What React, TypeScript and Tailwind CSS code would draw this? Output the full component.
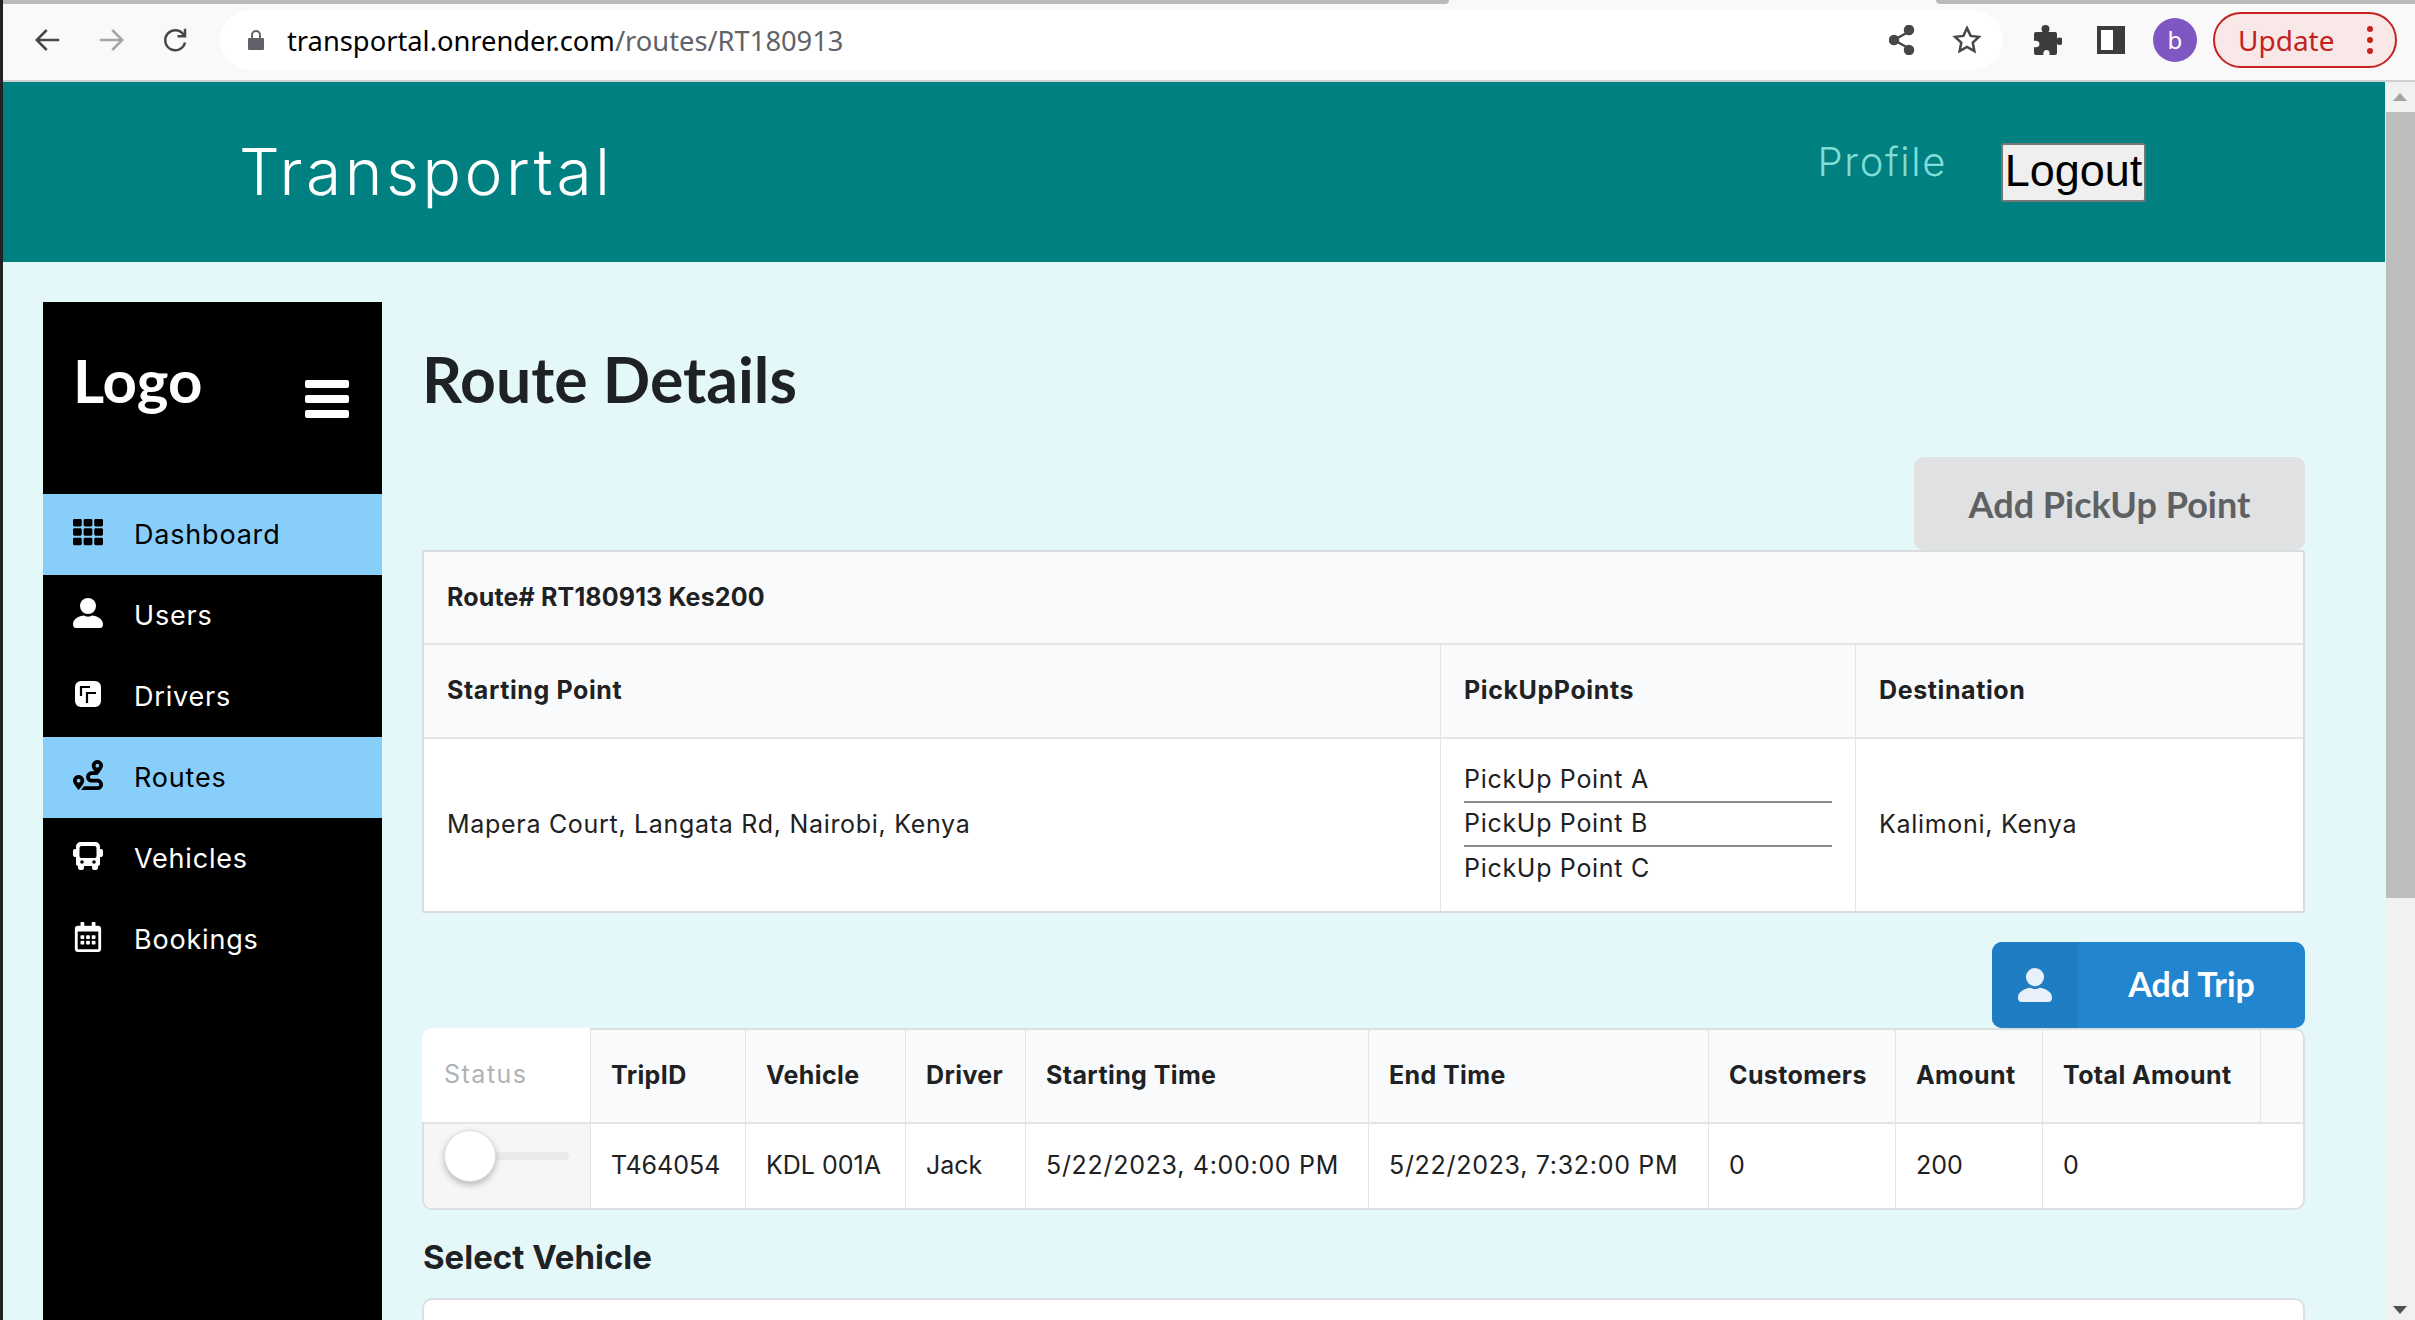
import { FaTh, FaRoute, FaRegCalendarAlt } from "react-icons/fa";

function UserIcon({ size = 30 }: { size?: number }) {
  return (
    <svg width={size} height={size} viewBox="0 0 30 30" fill="currentColor">
      <circle cx="15" cy="8" r="8" />
      <path d="M0 26c0-5 6-8 11-8.500 2 1.500 6 1.500 8 0 5 .5 11 3.500 11 8.500 0 2.500-1 4-3 4H3c-2 0-3-1.500-3-4z" />
    </svg>
  );
}

function DriverIcon() {
  return (
    <svg width="26" height="26" viewBox="0 0 26 26">
      <rect width="26" height="26" rx="6" fill="currentColor" />
      <path d="M6 15V6h9M12 22V12h9" fill="none" stroke="#000" strokeWidth="2.200" />
    </svg>
  );
}

function BusIcon() {
  return (
    <svg width="30" height="30" viewBox="0 0 30 30">
      <path
        fill="currentColor"
        d="M8 1h14c3 0 5 2 5 5v2h1a2 2 0 0 1 2 2v4a2 2 0 0 1-2 2h-1v7c0 1-1 2-2 2v2a2 2 0 0 1-2 2h-2a2 2 0 0 1-2-2v-2h-8v2a2 2 0 0 1-2 2H7a2 2 0 0 1-2-2v-2c-1 0-2-1-2-2v-7H2a2 2 0 0 1-2-2v-4a2 2 0 0 1 2-2h1V6c0-3 2-5 5-5z"
      />
      <rect x="6.500" y="5" width="17" height="12" rx="2" fill="#000" />
      <circle cx="9" cy="21" r="1.800" fill="#000" />
      <circle cx="21" cy="21" r="1.800" fill="#000" />
    </svg>
  );
}

function PuzzleIcon() {
  return (
    <svg width="29" height="30" viewBox="0 0 29 30" fill="#3c3c3c">
      <path d="M3 7h6.500c-.5-1-1-1.800-1-3a4 4 0 0 1 8 0c0 1.200-.5 2-1 3H22a2 2 0 0 1 2 2v4.500c1-.5 1.500-1 2.500-1a3.500 3.500 0 0 1 0 7.500c-1 0-1.500-.5-2.500-1V28a2 2 0 0 1-2 2h-5.500c.5-4-1-5-3-5s-3.500 1-3 5H3a2 2 0 0 1-2-2v-6c3 1 5.500-.5 5.500-3S4 15 1 16V9a2 2 0 0 1 2-2z" />
    </svg>
  );
}

const menu = [
  { label: "Dashboard", icon: <FaTh size={30} />, active: true },
  { label: "Users", icon: <UserIcon /> },
  { label: "Drivers", icon: <div className="pl-[2px]"><DriverIcon /></div> },
  { label: "Routes", icon: <FaRoute size={30} />, active: true },
  { label: "Vehicles", icon: <BusIcon /> },
  { label: "Bookings", icon: <FaRegCalendarAlt size={30} /> },
];

function BrowserBar() {
  return (
    <div className="h-[82px] shrink-0 bg-[#f9f9f9] border-b-2 border-[#cfcfcf] relative flex items-center">
      <div className="absolute top-0 left-0 w-[1446px] h-[4px] bg-[#b9b9b9] rounded-br-[4px]" />
      <div className="absolute top-0 right-0 w-[479px] h-[4px] bg-[#b9b9b9] rounded-bl-[4px]" />
      <div className="flex items-center w-[217px] pl-[30px] gap-[33px] text-[#45474a]">
        <svg width="30" height="30" viewBox="0 0 24 24" fill="none" stroke="currentColor" strokeWidth="2">
          <path d="M21 12H4M11 4l-8 8 8 8" />
        </svg>
        <svg width="30" height="30" viewBox="0 0 24 24" fill="none" stroke="#a5a6a8" strokeWidth="2">
          <path d="M3 12h17M13 4l8 8-8 8" />
        </svg>
        <svg className="ml-[1px]" width="30" height="30" viewBox="0 0 24 24" fill="none" stroke="currentColor" strokeWidth="2">
          <path d="M19 8a8 8 0 1 0 1 6" />
          <path d="M20 3v6h-6" />
        </svg>
      </div>
      <div className="w-[1783px] h-[60px] bg-white rounded-full flex items-center pl-[27px] pr-[21px]">
        <svg width="18" height="22" viewBox="0 0 18 22" fill="#5f6368">
          <path d="M2 9h14a1 1 0 0 1 1 1v10a1 1 0 0 1-1 1H2a1 1 0 0 1-1-1V10a1 1 0 0 1 1-1z" />
          <path d="M5 9V6a4 4 0 0 1 8 0v3" fill="none" stroke="#5f6368" strokeWidth="2" />
        </svg>
        <div className="ml-[22px] mt-[1px] text-[27.300px] font-['Noto_Sans',sans-serif] text-black leading-none">
          transportal.onrender.com<span className="text-[#5f6368]">/routes/RT180913</span>
        </div>
        <div className="ml-auto flex items-center gap-[37px] text-[#45474a]">
          <svg width="26" height="30" viewBox="0 0 26 30" fill="none" stroke="currentColor" strokeWidth="2.500">
            <path d="M21 6L5 15l16 9" />
            <circle cx="20" cy="5" r="4" fill="currentColor" />
            <circle cx="5" cy="15" r="4" fill="currentColor" />
            <circle cx="20" cy="25" r="4" fill="currentColor" />
          </svg>
          <svg width="30" height="30" viewBox="0 0 24 24" fill="none" stroke="currentColor" strokeWidth="2">
            <path d="M12 2.500l2.900 6.200 6.600.8-4.900 4.600 1.300 6.700L12 17.500l-5.900 3.300 1.300-6.700L2.500 9.500l6.600-.8z" />
          </svg>
        </div>
      </div>
      <div className="ml-[30px]">
        <PuzzleIcon />
      </div>
      <div className="ml-[35px] w-[28px] h-[28px] bg-white border-[4px] border-[#3c3c3c] border-r-[12px]" />
      <div className="ml-[28px] w-[44px] h-[44px] rounded-full bg-[#7e57c2] text-white text-[24px] flex items-center justify-center font-['Noto_Sans',sans-serif]">
        b
      </div>
      <div className="ml-[16px] w-[184px] h-[56px] rounded-full border-2 border-[#c5221f] bg-[#f9e8e8] flex items-center pl-[23px] text-[#c5221f] text-[28px] font-['Noto_Sans',sans-serif]">
        Update
        <div className="ml-[32px] flex flex-col gap-[5px]">
          <span className="w-[6px] h-[6px] rounded-full bg-[#c5221f]" />
          <span className="w-[6px] h-[6px] rounded-full bg-[#c5221f]" />
          <span className="w-[6px] h-[6px] rounded-full bg-[#c5221f]" />
        </div>
      </div>
    </div>
  );
}

function Sidebar() {
  return (
    <aside className="w-[339px] shrink-0 bg-black text-white mt-[40px] ml-[40px]">
      <div className="h-[192px] flex items-start justify-between pl-[30px] pr-[33px]">
        <div className="mt-[42px] text-[60px] font-bold leading-[72px] font-['Lato',sans-serif]">Logo</div>
        <div className="mt-[78px] w-[44px] flex flex-col gap-[7px]">
          <span className="h-[8px] rounded-[2px] bg-white" />
          <span className="h-[8px] rounded-[2px] bg-white" />
          <span className="h-[8px] rounded-[2px] bg-white" />
        </div>
      </div>
      {menu.map((m) => (
        <div
          key={m.label}
          className={`h-[81px] flex items-center pl-[30px] ${m.active ? "bg-[#87cefa] text-black" : ""}`}
        >
          <div className="w-[61px] -mt-[6px]">{m.icon}</div>
          <div className="mt-[2px] text-[27px] tracking-[0.8px] font-['Inter',sans-serif]">{m.label}</div>
        </div>
      ))}
    </aside>
  );
}

const th = "px-[23px] flex items-center font-bold tracking-[0.6px] text-[#202122] bg-[#f9fafb] border-r border-[#e3e4e5] last:border-r-0";
const td = "flex items-center tracking-[0.7px] text-[#202122] border-r border-[#e3e4e5] last:border-r-0";

function RouteTable() {
  return (
    <div className="border-2 border-[#d8dcdc] bg-white text-[25px] font-['Inter',sans-serif] rounded-[2px]">
      <div className="h-[93px] px-[23px] flex items-center font-bold tracking-[0.15px] text-[#202122] bg-[#f9fafb] border-b-2 border-[#e3e4e5]">
        Route# RT180913 Kes200
      </div>
      <div className="h-[94px] grid grid-cols-[1017px_415px_1fr] border-b-2 border-[#e3e4e5]">
        <div className={th}>Starting Point</div>
        <div className={th}>PickUpPoints</div>
        <div className={th}>Destination</div>
      </div>
      <div className="h-[172px] grid grid-cols-[1017px_415px_1fr]">
        <div className={`${td} px-[23px]`}>Mapera Court, Langata Rd, Nairobi, Kenya</div>
        <div className={`${td} px-[23px]`}>
          <div className="w-full">
            <div className="h-[44px] flex items-center border-b-2 border-[#8d8d8d]">PickUp Point A</div>
            <div className="h-[44px] flex items-center border-b-2 border-[#8d8d8d]">PickUp Point B</div>
            <div className="h-[44px] flex items-center">PickUp Point C</div>
          </div>
        </div>
        <div className={`${td} px-[23px]`}>Kalimoni, Kenya</div>
      </div>
    </div>
  );
}

const tripCols = "grid grid-cols-[167px_155px_160px_120px_343px_340px_187px_147px_218px_1fr]";

function TripTable() {
  const heads = ["TripID", "Vehicle", "Driver", "Starting Time", "End Time", "Customers", "Amount", "Total Amount", ""];
  const cells = ["T464054", "KDL 001A", "Jack", "5/22/2023, 4:00:00 PM", "5/22/2023, 7:32:00 PM", "0", "200", "0"];
  return (
    <div className="border-2 border-[#dcdfdf] rounded-[10px] bg-white text-[25px] font-['Inter',sans-serif] h-[182px]">
      <div className={`${tripCols} h-[94px] border-b-2 border-[#e3e4e5]`}>
        <div className="bg-white rounded-tl-[10px] -mt-[2px] -ml-[2px] px-[22px] flex items-center tracking-[1.5px] text-[#b0b2b3] border-r border-[#e3e4e5]">
          Status
        </div>
        {heads.map((h, i) => (
          <div key={i} className={`${th} !px-[20px] !tracking-[0.4px] ${i === heads.length - 1 ? "rounded-tr-[10px]" : ""}`}>
            {h}
          </div>
        ))}
      </div>
      <div className={`${tripCols} h-[84px]`}>
        <div className="bg-[#f6f6f6] rounded-bl-[10px] border-r border-[#e3e4e5] relative">
          <div className="absolute left-[50px] top-[28px] w-[95px] h-[8px] rounded-[4px] bg-[#e9e9e9]" />
          <div className="absolute left-[20px] top-[6px] w-[52px] h-[52px] rounded-full bg-white border border-[#dcdcdc] shadow-[0_3px_6px_rgba(0,0,0,0.25)]" />
        </div>
        {cells.map((c, i) => (
          <div key={i} className={`${td} px-[20px] ${c.includes("/") ? "" : "!tracking-[0px]"}`}>
            {c}
          </div>
        ))}
      </div>
    </div>
  );
}

export default function App() {
  return (
    <div className="w-[2415px] h-[1320px] overflow-hidden flex flex-col border-l-[3px] border-[#222] bg-[#e5f8f9]">
      <BrowserBar />
      <div className="flex-1 flex min-h-0">
        <div className="flex-1 flex flex-col min-w-0">
          <header className="h-[180px] shrink-0 bg-[#008080] flex items-center">
            <div className="ml-[236px] text-[64px] font-light tracking-[3.500px] text-white font-['Inter',sans-serif]">
              Transportal
            </div>
            <div className="ml-auto mr-[54px] -mt-[20px] text-[40px] font-light tracking-[1.600px] text-[#7fdcd6] font-['Inter',sans-serif]">
              Profile
            </div>
            <button className="mr-[239px] w-[145px] h-[59px] pb-[3px] bg-[#efefef] border-2 border-[#767676] rounded-[3px] text-[45px] leading-none text-black font-['Liberation_Sans',sans-serif]">
              Logout
            </button>
          </header>
          <div className="flex-1 flex min-h-0">
            <Sidebar />
            <main className="flex-1 min-w-0 pl-[40px] pr-[80px]">
              <div className="h-[195px] pt-[81px]">
                <h1 className="text-[62.500px] leading-[72px] font-bold text-[#1f2224] font-['Lato',sans-serif]">Route Details</h1>
              </div>
              <div className="flex justify-end">
                <div className="w-[391px] h-[93px] rounded-[10px] bg-[#e0e1e2] text-[#5f6061] text-[36px] font-bold flex items-center justify-center font-['Lato',sans-serif]">
                  Add PickUp Point
                </div>
              </div>
              <RouteTable />
              <div className="flex justify-end mt-[29px]">
                <div className="w-[313px] h-[86px] rounded-[10px] bg-[#2185d0] text-white text-[34px] font-bold flex overflow-hidden font-['Lato',sans-serif]">
                  <div className="w-[86px] bg-[#1f7dc4] flex items-center justify-center text-[#e8f1f9]">
                    <UserIcon size={34} />
                  </div>
                  <div className="flex-1 flex items-center justify-center pb-[4px]">Add Trip</div>
                </div>
              </div>
              <TripTable />
              <div className="h-[88px] pt-[8px] pl-[1px] flex items-center text-[33px] font-bold text-[#1f2224] font-['Inter',sans-serif]">
                Select Vehicle
              </div>
              <div className="h-[60px] bg-white border-2 border-[#dcdfdf] rounded-[10px]" />
            </main>
          </div>
        </div>
        <div className="w-[30px] shrink-0 bg-[#f1f1f1] flex flex-col items-center relative">
          <div className="h-[30px] flex items-center justify-center">
            <div className="w-0 h-0 border-x-[7px] border-x-transparent border-b-[8px] border-b-[#a3a3a3]" />
          </div>
          <div className="w-full ml-[2px] h-[786px] bg-[#bdbdbd]" />
          <div className="absolute bottom-[6px] w-0 h-0 border-x-[7px] border-x-transparent border-t-[8px] border-t-[#505050]" />
        </div>
      </div>
    </div>
  );
}
